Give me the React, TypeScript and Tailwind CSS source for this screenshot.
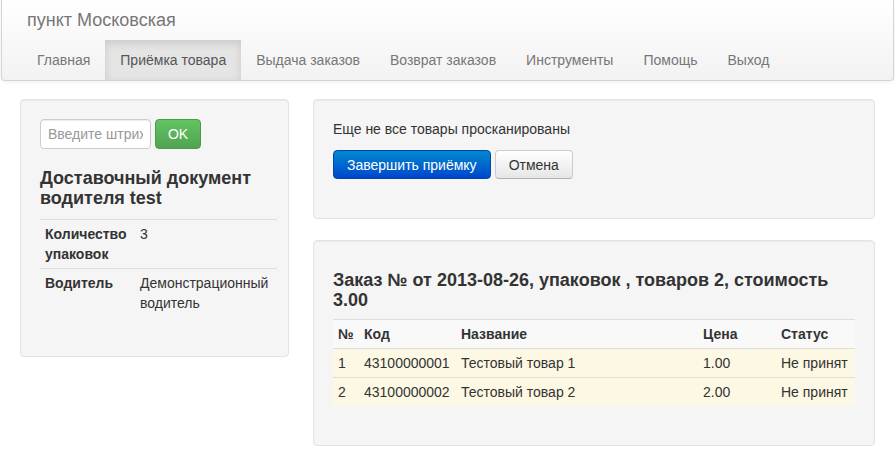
import React from 'react';

const navItems = ['Главная', 'Приёмка товара', 'Выдача заказов', 'Возврат заказов', 'Инструменты', 'Помощь', 'Выход'];

const items = [
  { n: 1, code: '43100000001', name: 'Тестовый товар 1', price: '1.00', status: 'Не принят' },
  { n: 2, code: '43100000002', name: 'Тестовый товар 2', price: '2.00', status: 'Не принят' },
];

export default function App() {
  return (
    <div className="min-h-[465px] bg-white font-['Liberation_Sans',Arial,sans-serif] text-[14px] leading-[20px] text-[#333]">
      {/* navbar */}
      <div className="mx-px rounded-b-[4px] border border-t-0 border-[#d4d4d4] bg-gradient-to-b from-white to-[#f2f2f2] shadow-[0_1px_4px_rgba(0,0,0,0.065)]">
        <div className="flex h-[40px] items-center pl-[25px] text-[18px] text-[#777]">пункт Московская</div>
        <ul className="flex h-[40px] pl-[20px]">
          {navItems.map((item, i) => (
            <li
              key={item}
              className={
                i === 1
                  ? 'flex items-center bg-[#e5e5e5] px-[15px] text-[#555] shadow-[inset_0_3px_8px_rgba(0,0,0,0.125)]'
                  : 'flex items-center px-[15px] text-[#777]'
              }
            >
              {item}
            </li>
          ))}
        </ul>
      </div>

      <div className="flex gap-[24px] px-[20px] pt-[18px]">
        {/* left */}
        <div className="w-[269px] shrink-0">
          <div className="rounded-[4px] border border-[#e3e3e3] bg-[#f5f5f5] p-[19px] pr-[11px] shadow-[inset_0_1px_1px_rgba(0,0,0,0.05)]">
            <div className="flex gap-[4px]">
              <input
                placeholder="Введите штрих-код"
                className="h-[30px] w-[111px] rounded-[4px] border border-[#ccc] bg-white px-[7px] text-[14px] text-[#555] placeholder:text-[#999] shadow-[inset_0_1px_1px_rgba(0,0,0,0.075)] outline-none"
              />
              <button className="h-[30px] w-[46px] rounded-[4px] border border-[#4a9a4a] bg-gradient-to-b from-[#62c462] to-[#51a351] text-white">
                OK
              </button>
            </div>
            <h3 className="mt-[19px] mb-[11px] text-[18px] font-bold leading-[20px] text-[#333]">
              Доставочный документ водителя test
            </h3>
            <table className="mb-[20px] w-full border-collapse">
              <tbody>
                <tr className="border-t border-[#ddd] align-top">
                  <th className="w-[95px] px-[5px] py-[4px] text-left font-bold">Количество упаковок</th>
                  <td className="px-[5px] py-[4px]">3</td>
                </tr>
                <tr className="border-t border-[#ddd] align-top">
                  <th className="w-[95px] px-[5px] py-[4px] text-left font-bold">Водитель</th>
                  <td className="px-[5px] py-[4px]">Демонстрационный водитель</td>
                </tr>
              </tbody>
            </table>
          </div>
        </div>

        {/* right */}
        <div className="flex flex-1 flex-col gap-[21px]">
          <div className="rounded-[4px] border border-[#e3e3e3] bg-[#f5f5f5] p-[19px] pb-[39px] shadow-[inset_0_1px_1px_rgba(0,0,0,0.05)]">
            <p className="mb-[11px]">Еще не все товары просканированы</p>
            <div className="flex gap-[4px]">
              <button className="h-[29px] rounded-[4px] border border-[#0044b0] bg-gradient-to-b from-[#0088cc] to-[#0044cc] px-[13px] text-white">
                Завершить приёмку
              </button>
              <button className="h-[29px] rounded-[4px] border border-[#ccc] border-b-[#b3b3b3] bg-gradient-to-b from-white to-[#e6e6e6] px-[13px] text-[#333]">
                Отмена
              </button>
            </div>
          </div>

          <div className="rounded-[4px] border border-[#e3e3e3] bg-[#f5f5f5] p-[19px] shadow-[inset_0_1px_1px_rgba(0,0,0,0.05)]">
            <h3 className="mt-[10px] mb-[9px] text-[18px] font-bold leading-[20px] text-[#333]">
              Заказ № от 2013-08-26, упаковок , товаров 2, стоимость 3.00
            </h3>
            <table className="mb-[20px] w-full border-collapse">
              <thead>
                <tr className="border-t border-[#ddd] bg-[#f9f9f9] text-left">
                  <th className="w-[26px] px-[5px] py-[4px] font-bold">№</th>
                  <th className="w-[97px] px-[5px] py-[4px] font-bold">Код</th>
                  <th className="w-[242px] px-[5px] py-[4px] font-bold">Название</th>
                  <th className="w-[78px] px-[5px] py-[4px] font-bold">Цена</th>
                  <th className="px-[5px] py-[4px] font-bold">Статус</th>
                </tr>
              </thead>
              <tbody>
                {items.map((it) => (
                  <tr key={it.n} className="border-t border-[#ddd] bg-[#fcf8e3]">
                    <td className="px-[5px] py-[4px]">{it.n}</td>
                    <td className="px-[5px] py-[4px]">{it.code}</td>
                    <td className="px-[5px] py-[4px]">{it.name}</td>
                    <td className="px-[5px] py-[4px]">{it.price}</td>
                    <td className="whitespace-nowrap px-[5px] py-[4px]">{it.status}</td>
                  </tr>
                ))}
              </tbody>
            </table>
          </div>
        </div>
      </div>
    </div>
  );
}
